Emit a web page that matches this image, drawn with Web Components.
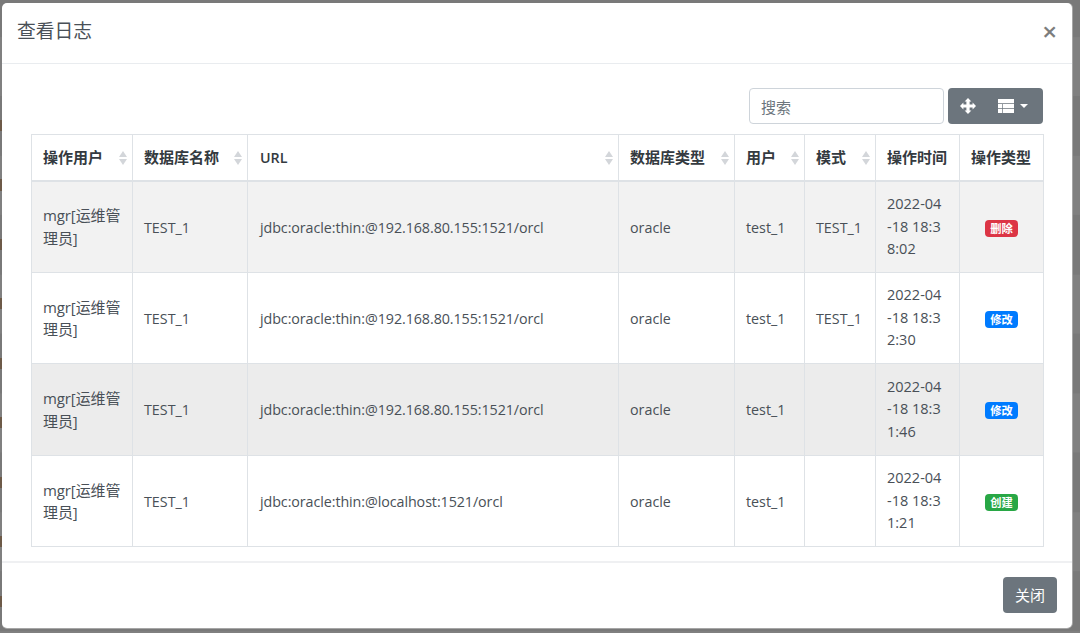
<!DOCTYPE html>
<html>
<head>
<meta charset="utf-8">
<title>查看日志</title>
<style>
  html, body { margin: 0; height: 100%; }
  body {
    height: 633px;
    overflow: hidden;
    /* striped rows of the page behind the backdrop */
    background: repeating-linear-gradient(180deg, #797979 0, #797979 59.4px, #808080 59.4px, #808080 118.800px) 0 96px / 100% 118.800px;
    font: 15px/1.5 "Open Sans", "Noto Sans CJK SC", sans-serif;
    color: #495057;
  }
</style>
</head>
<body>
<log-dialog heading="查看日志">
  <log-toolbar></log-toolbar>
  <log-table></log-table>
</log-dialog>

<script>
const FONT = '"Open Sans", "Noto Sans CJK SC", sans-serif';

class LogDialog extends HTMLElement {
  constructor() {
    super();
    this.attachShadow({ mode: 'open' });
  }

  connectedCallback() {
    this.shadowRoot.innerHTML = `
      <style>
        :host { display: block; padding: 3px 8px 5px 2px; height: 633px; box-sizing: border-box; position: relative; }
        /* bits of page text that show at the left edge */
        .edge { position: absolute; left: 0; top: 120px; width: 2px; height: 490px; background: repeating-linear-gradient(180deg, #6d5a48 0, #6d5a48 11px, transparent 11px, transparent 59.5px); }
        .modal { height: 100%; box-sizing: border-box; background: #fff; border-radius: 5px; display: flex; flex-direction: column; box-shadow: 1px 0 0 #a6a6a6, 0 1px 0 #a6a6a6; }
        header { height: 61px; box-sizing: border-box; padding: 0 15px 4px; display: flex; justify-content: space-between; align-items: center; border-bottom: 1px solid #e9ecef; flex: none; }
        h5 { margin: 0; font: 400 18.75px/1.5 ${FONT}; color: #495057; }
        .close { font: 600 26px/1 ${FONT}; color: #7d7d7d; margin: 0; }
        main { flex: 1; padding: 24px 29px 0; }
        footer { height: 67px; box-sizing: border-box; border-top: 2px solid #eff0f2; padding: 14px 15px 0; display: flex; justify-content: flex-end; flex: none; }
        .btn { width: 54px; height: 36px; box-sizing: border-box; background: #6c757d; color: #fff; border-radius: 4px; display: flex; align-items: center; justify-content: center; }
      </style>
      <div class="edge"></div>
      <div class="modal">
        <header><h5>${this.getAttribute('heading')}</h5><span class="close">×</span></header>
        <main><slot></slot></main>
        <footer><span class="btn">关闭</span></footer>
      </div>`;
  }
}

class LogToolbar extends HTMLElement {
  constructor() {
    super();
    this.attachShadow({ mode: 'open' });
  }

  connectedCallback() {
    this.shadowRoot.innerHTML = `
      <style>
        :host { display: flex; justify-content: flex-end; gap: 4px; height: 36px; margin-bottom: 10px; }
        .search { width: 195px; height: 36px; box-sizing: border-box; border: 1px solid #ced4da; border-radius: 4px; padding: 0 11px; color: #6c757d; line-height: 36px; }
        .group { width: 95px; height: 36px; background: #6c757d; border-radius: 4px; color: #fff; display: flex; align-items: center; padding-left: 12px; box-sizing: border-box; }
        svg { display: block; fill: #fff; }
        .table-icon { margin-left: 22px; }
        .caret { margin-left: 6px; width: 0; height: 0; border: 4.5px solid transparent; border-top-color: #fff; border-bottom: 0; }
      </style>
      <div class="search">搜索</div>
      <div class="group">
        <svg width="16" height="16" viewBox="0 0 16 16"><path d="M8 0l3.400 3.400H9.600v3h3V4.600L16 8l-3.400 3.400V9.600h-3v3h1.800L8 16l-3.400-3.400h1.800v-3h-3v1.800L0 8l3.400-3.400v1.800h3v-3H4.600z"/></svg>
        <svg class="table-icon" width="16" height="14" viewBox="0 0 16 14"><path d="M0 0h16v4.200H0z M0 4.900h4v4.200H0z M4.700 4.900H16v4.200H4.700z M0 9.800h4V14H0z M4.700 9.800H16V14H4.700z"/></svg>
        <span class="caret"></span>
      </div>`;
  }
}

const COLUMNS = [
  ['操作用户', 101, true], ['数据库名称', 115, true], ['URL', 371, true], ['数据库类型', 116, true],
  ['用户', 70, true], ['模式', 71, true], ['操作时间', 84, false], ['操作类型', 84, false]
];
const ROWS = [
  ['TEST_1', 'jdbc:oracle:thin:@192.168.80.155:1521/orcl', 'TEST_1', '2022-04-18 18:38:02', '删除', '#dc3545', '#f2f2f2'],
  ['TEST_1', 'jdbc:oracle:thin:@192.168.80.155:1521/orcl', 'TEST_1', '2022-04-18 18:32:30', '修改', '#007bff', '#fff'],
  ['TEST_1', 'jdbc:oracle:thin:@192.168.80.155:1521/orcl', '', '2022-04-18 18:31:46', '修改', '#007bff', '#ececec'],
  ['TEST_1', 'jdbc:oracle:thin:@localhost:1521/orcl', '', '2022-04-18 18:31:21', '创建', '#28a745', '#fff']
];

class LogTable extends HTMLElement {
  constructor() {
    super();
    this.attachShadow({ mode: 'open' });
  }

  connectedCallback() {
    const cols = COLUMNS.map(c => `<col style="width:${c[1]}px">`).join('');
    const head = COLUMNS.map(c => `<th${c[0] === 'URL' ? ' class="l"' : ''}>${c[0]}${c[2] ? '<i></i>' : ''}</th>`).join('');
    const body = ROWS.map(r => `
      <tr style="background:${r[6]}">
        <td class="user">mgr[运维管理员]</td><td class="l">${r[0]}</td><td class="l url">${r[1]}</td><td class="l">oracle</td><td class="l">test_1</td><td class="l">${r[2]}</td>
        <td class="time">${r[3]}</td>
        <td class="type"><span class="badge" style="background:${r[5]}">${r[4]}</span></td>
      </tr>`).join('');
    this.shadowRoot.innerHTML = `
      <style>
        :host { display: block; }
        table { table-layout: fixed; border-collapse: collapse; width: 1012px; color: #495057; }
        th, td { border: 1px solid #dee2e6; padding: 0 11px; font-size: 15px; line-height: 22.500px; }
        th { height: 46px; box-sizing: border-box; text-align: left; font-weight: 600; color: #343a40; position: relative; border-bottom-width: 2px; }
        td { height: 91px; box-sizing: border-box; }
        tr:nth-child(odd) td { height: 92px; }
        th.l { font-size: 14.300px; padding: 2px 11px 0 12px; }
        td.l { font-size: 14.300px; padding-top: 2px; }
        td.url { letter-spacing: -0.08px; padding-left: 12px; }
        td.user { padding-right: 6px; letter-spacing: -0.1px; }
        td.time { word-break: break-all; font-size: 14.500px; padding-right: 15px; }
        td.type { text-align: center; padding: 0; }
        i { position: absolute; right: 5px; top: 16px; width: 8px; height: 14px; }
        i::before, i::after { content: ""; position: absolute; left: 0; border: 4px solid transparent; }
        i::before { top: 0; border-top: 0; border-bottom: 6px solid #d3d6da; }
        i::after { bottom: 0; border-bottom: 0; border-top: 6px solid #d3d6da; }
        .badge { display: inline-block; color: #fff; font-size: 11.250px; font-weight: 700; line-height: 11px; padding: 3px 4.800px; border-radius: 4px; }
      </style>
      <table><colgroup>${cols}</colgroup><thead><tr>${head}</tr></thead><tbody>${body}</tbody></table>`;
  }
}

customElements.define('log-dialog', LogDialog);
customElements.define('log-toolbar', LogToolbar);
customElements.define('log-table', LogTable);
</script>
</body>
</html>
